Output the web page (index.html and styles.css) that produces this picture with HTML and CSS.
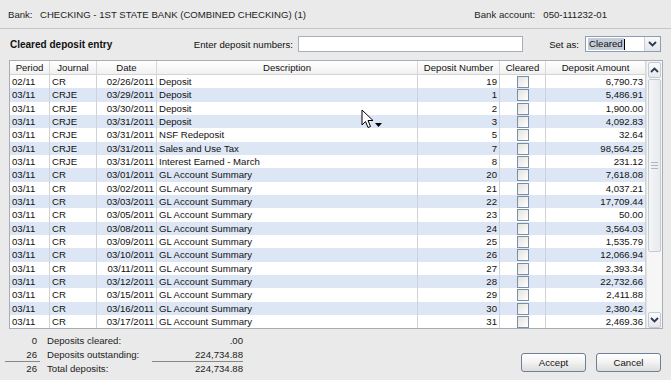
FILE: index.html
```html
<!DOCTYPE html>
<html lang="en">
<head>
  <meta charset="UTF-8" />
  <title>Cleared deposit entry</title>
  <link rel="stylesheet" href="styles.css">
</head>
<body>
  <div class="top">
    <div><span class="lbl">Bank:</span>CHECKING - 1ST STATE BANK (COMBINED CHECKING) (1)</div>
    <div class="acct"><span class="lbl lbl-acct">Bank account:</span>050-111232-01</div>
  </div>

  <div class="toolbar">
    <div class="title">Cleared deposit entry</div>
    <label class="enter">Enter deposit numbers:</label>
    <div class="input"></div>
    <label class="setas">Set as:</label>
    <div class="select">
      <span class="sel-text">Cleared</span><span class="caret"></span>
      <div class="drop">
        <svg width="9" height="6" viewBox="0 0 9 6"><path d="M1 1 L4.5 4.5 L8 1" fill="none" stroke="#2b3a55" stroke-width="1.8"/></svg>
      </div>
    </div>
  </div>

  <div class="grid">
    <div class="list">
      <div class="head">
        <span>Period</span><span>Journal</span><span>Date</span><span>Description</span>
        <span>Deposit Number</span><span>Cleared</span><span>Deposit Amount</span>
      </div>
      <div id="rows"></div>
    </div>
    <div class="scroll">
      <div class="sbtn">
        <svg width="9" height="6" viewBox="0 0 9 6"><path d="M1 5 L4.5 1.5 L8 5" fill="none" stroke="#2b3a55" stroke-width="1.8"/></svg>
      </div>
      <div class="track">
        <div class="thumb"><div class="grip"></div></div>
      </div>
      <div class="sbtn">
        <svg width="9" height="6" viewBox="0 0 9 6"><path d="M1 1 L4.5 4.5 L8 1" fill="none" stroke="#2b3a55" stroke-width="1.8"/></svg>
      </div>
    </div>
  </div>

  <div class="footer">
    <div class="totals">
      <span class="n">0</span><span>Deposits cleared:</span><span class="amt">.00</span>
      <span class="n line">26</span><span>Deposits outstanding:</span><span class="amt line">224,734.88</span>
      <span class="n">26</span><span>Total deposits:</span><span class="amt">224,734.88</span>
    </div>
    <div class="buttons">
      <button>Accept</button>
      <button>Cancel</button>
    </div>
  </div>

  <svg class="cursor" width="24" height="22" viewBox="0 0 24 22">
    <path d="M1 1 L1 16 L4.5 12.5 L7 18.5 L9.5 17.5 L7 11.5 L12 11.5 Z" fill="#fff" stroke="#000" stroke-width="1"/>
    <path d="M14 14 L21 14 L17.5 18 Z" fill="#000"/>
  </svg>

  <script>
    const ROWS = [
      ['02/11', 'CR',   '02/26/2011', 'Deposit',                 19, '6,790.73'],
      ['03/11', 'CRJE', '03/29/2011', 'Deposit',                  1, '5,486.91'],
      ['03/11', 'CRJE', '03/30/2011', 'Deposit',                  2, '1,900.00'],
      ['03/11', 'CRJE', '03/31/2011', 'Deposit',                  3, '4,092.83'],
      ['03/11', 'CRJE', '03/31/2011', 'NSF Redeposit',            5, '32.64'],
      ['03/11', 'CRJE', '03/31/2011', 'Sales and Use Tax',        7, '98,564.25'],
      ['03/11', 'CRJE', '03/31/2011', 'Interest Earned - March',  8, '231.12'],
      ['03/11', 'CR',   '03/01/2011', 'GL Account Summary',      20, '7,618.08'],
      ['03/11', 'CR',   '03/02/2011', 'GL Account Summary',      21, '4,037.21'],
      ['03/11', 'CR',   '03/03/2011', 'GL Account Summary',      22, '17,709.44'],
      ['03/11', 'CR',   '03/05/2011', 'GL Account Summary',      23, '50.00'],
      ['03/11', 'CR',   '03/08/2011', 'GL Account Summary',      24, '3,564.03'],
      ['03/11', 'CR',   '03/09/2011', 'GL Account Summary',      25, '1,535.79'],
      ['03/11', 'CR',   '03/10/2011', 'GL Account Summary',      26, '12,066.94'],
      ['03/11', 'CR',   '03/11/2011', 'GL Account Summary',      27, '2,393.34'],
      ['03/11', 'CR',   '03/12/2011', 'GL Account Summary',      28, '22,732.66'],
      ['03/11', 'CR',   '03/15/2011', 'GL Account Summary',      29, '2,411.88'],
      ['03/11', 'CR',   '03/16/2011', 'GL Account Summary',      30, '2,380.42'],
      ['03/11', 'CR',   '03/17/2011', 'GL Account Summary',      31, '2,469.36']
    ];
    const rows = document.getElementById('rows');

    ROWS.forEach(r => {
      const row = document.createElement('div');
      row.className = 'row';
      row.innerHTML =
        `<span>${r[0]}</span><span>${r[1]}</span><span class="num">${r[2]}</span>` +
        `<span>${r[3]}</span><span class="num">${r[4]}</span>` +
        `<span class="chk"><i></i></span><span class="num">${r[5]}</span>`;
      rows.appendChild(row);
    });
  </script>
</body>
</html>
```

FILE: styles.css
```css
body {
  margin: 0;
  width: 671px;
  height: 380px;
  background: #eaeaea;
  font-family: 'Liberation Sans', Tahoma, sans-serif;
  font-size: 9.6px;
  color: #111;
  position: relative;
  overflow: hidden;
  white-space: nowrap;
}
.top {
  height: 28px;
  display: flex;
  align-items: center;
  justify-content: space-between;
  padding: 0 64px 0 8px;
  border-bottom: 1px solid #c6c6c6;
  color: #222;
}
.lbl {
  display: inline-block;
  width: 32px;
}
.lbl-acct {
  width: 69px;
}
.toolbar {
  display: flex;
  align-items: center;
  height: 16px;
  margin-top: 7px;
  padding-left: 10px;
}
.title {
  width: 183px;
  font-weight: bold;
  font-size: 10px;
}
.enter {
  width: 105px;
  text-align: right;
  padding-right: 5px;
  box-sizing: border-box;
}
.input {
  width: 225px;
  height: 16px;
  box-sizing: border-box;
  background: #fff;
  border: 1px solid #a7afbb;
}
.setas {
  width: 62px;
  text-align: right;
  padding-right: 6px;
  box-sizing: border-box;
}
.select {
  width: 76px;
  height: 16px;
  box-sizing: border-box;
  border: 1px solid #8d9db5;
  background: #fff;
  display: flex;
  align-items: center;
  padding-left: 2px;
}
.sel-text {
  background: #c4ccd8;
  line-height: 12px;
  padding: 0 1px;
}
.caret {
  width: 1px;
  height: 11px;
  background: #000;
}
.drop {
  margin-left: auto;
  width: 15px;
  height: 14px;
  border-left: 1px solid #c8cfd9;
  background: linear-gradient(#f8f8f8, #e4e6ea);
  display: flex;
  align-items: center;
  justify-content: center;
}
.grid {
  display: flex;
  margin: 8px 0 0 9px;
  width: 652px;
  border: 1px solid #a9adb3;
  background: #fff;
}
.list {
  width: 636px;
}
.head,
.row {
  display: grid;
  grid-template-columns: 40px 47px 60px 261px 82px 46px 100px;
}
.head {
  height: 13px;
  line-height: 13px;
  background: linear-gradient(#fff, #f1f1f1);
  border-bottom: 1px solid #d3d3d3;
}
.head span {
  text-align: center;
  border-right: 1px solid #d8d8d8;
  overflow: hidden;
}
.row {
  height: 13.33px;
  line-height: 13.33px;
}
.row:nth-child(even) {
  background: #dce6f5;
}
.row span {
  padding: 0 2px;
  border-right: 1px solid #cfd3d8;
  overflow: hidden;
}
.row .num {
  text-align: right;
}
.row .chk {
  display: flex;
  justify-content: center;
  padding-top: 1px;
}
.chk i {
  width: 10px;
  height: 10px;
  border: 1px solid #7b8ea8;
  background: linear-gradient(135deg, #e2e2de, #fff);
}
.scroll {
  width: 15px;
  display: flex;
  flex-direction: column;
  background: #f6f6f6;
  border-left: 1px solid #e2e2e2;
}
.sbtn {
  height: 14px;
  margin: 1px 1px 0;
  border: 1px solid #c3cad4;
  border-radius: 2px;
  background: linear-gradient(#fbfbfb, #e6e8ec);
  display: flex;
  align-items: center;
  justify-content: center;
}
.track {
  flex: 1;
  padding: 0 1px;
}
.thumb {
  height: 171px;
  margin-top: 1px;
  border: 1px solid #c5cbd4;
  border-radius: 2px;
  background: linear-gradient(90deg, #f4f5f7, #e8eaee);
  display: flex;
  align-items: center;
  justify-content: center;
}
.grip {
  width: 7px;
  height: 5px;
  border-top: 1px solid #b0b6bf;
  border-bottom: 1px solid #b0b6bf;
  position: relative;
}
.grip::after {
  content: '';
  position: absolute;
  left: 0;
  right: 0;
  top: 2px;
  border-top: 1px solid #b0b6bf;
}
.footer {
  display: flex;
  justify-content: space-between;
  padding-right: 10px;
  margin-top: 5px;
}
.totals {
  display: grid;
  grid-template-columns: 37px 95px 96px;
  column-gap: 10px;
  grid-auto-rows: 14px;
  line-height: 14px;
  color: #222;
}
.totals .n,
.totals .amt {
  text-align: right;
}
.totals .amt {
  margin-right: 5px;
}
.totals .n.line {
  margin-left: 5px;
  margin-right: -3px;
  padding-right: 3px;
  border-bottom: 1px solid #888;
  line-height: 13px;
}
.totals .amt.line {
  border-bottom: 1px solid #888;
  line-height: 13px;
}
.buttons {
  display: flex;
  gap: 10px;
  margin-top: 19px;
}
.buttons button {
  width: 65px;
  height: 19px;
  font-family: inherit;
  font-size: 9.6px;
  color: #111;
  border: 1px solid #6f7f97;
  border-radius: 3px;
  background: linear-gradient(#ffffff, #f2f2f2 50%, #dcdcdc);
  padding: 0;
}
.cursor {
  position: absolute;
  left: 361px;
  top: 109px;
}
```
